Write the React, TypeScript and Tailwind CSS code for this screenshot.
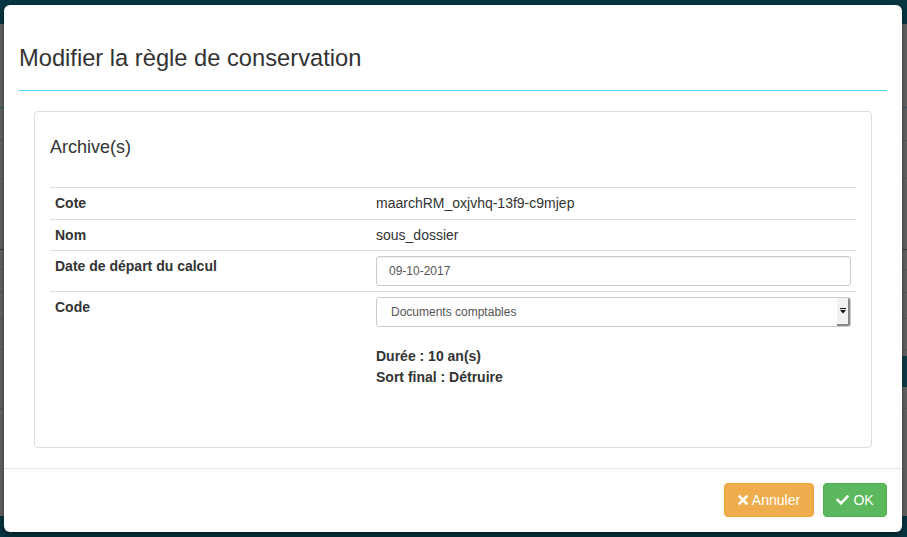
import React from "react";

function TimesIcon() {
  return (
    <svg width="10" height="10" viewBox="0 0 10 10" className="inline-block">
      <path d="M1.5 1.5 L8.5 8.5 M8.5 1.5 L1.5 8.5" stroke="white" strokeWidth="2.6" strokeLinecap="square" />
    </svg>
  );
}

function CheckIcon() {
  return (
    <svg width="13" height="10" viewBox="0 0 13 10" className="inline-block">
      <path d="M1.5 5 L5 8.3 L11.5 1.5" stroke="white" strokeWidth="2.6" fill="none" strokeLinecap="square" />
    </svg>
  );
}

export default function App() {
  const line = "h-px w-full";
  return (
    <div className="relative w-[907px] h-[537px] overflow-hidden font-['Liberation_Sans',Arial,sans-serif] text-[#333]">
      {/* backdrop page */}
      <div className="flex flex-col w-full h-full bg-[#686868]">
        <div className="h-[24px] bg-[#063743]" />
        <div className="h-[83px]" />
        <div className={`${line} bg-[#2f5f66]`} />
        <div className="h-[32px]" />
        <div className={`${line} bg-[#5a5a5a]`} />
        <div className="h-[37px]" />
        <div className={`${line} bg-[#5a5a5a]`} />
        <div className="h-[70px]" />
        <div className={`${line} bg-[#3c3c3c]`} />
        <div className="h-[19px]" />
        <div className={`${line} bg-[#5a5a5a]`} />
        <div className="h-[22px]" />
        <div className={`${line} bg-[#5a5a5a]`} />
        <div className="h-[25px]" />
        <div className={`${line} bg-[#5a5a5a]`} />
        <div className="h-[30px]" />
        <div className={`${line} bg-[#5a5a5a]`} />
        <div className="h-[6px]" />
        <div className="h-[31px] flex">
          <div className="w-[450px]" />
          <div className="flex-1 bg-[#0f3f4a]" />
        </div>
        <div className="h-[21px]" />
        <div className={`${line} bg-[#5a5a5a]`} />
        <div className="h-[107px]" />
        <div className="flex-1 bg-[#063743]" />
      </div>

      {/* modal */}
      <div className="absolute left-[4px] top-[5px] w-[898px] h-[527px] bg-white rounded-[6px] flex flex-col shadow-[0_3px_9px_rgba(0,0,0,0.5)]">
        <div className="mx-[15px] pt-[40px] pb-[19px] border-b border-[#4cd3f5]">
          <h3 className="text-[23.7px] leading-[26px] text-[#333] m-0">Modifier la règle de conservation</h3>
        </div>

        <div className="px-[30px] pt-[20px]">
          <div className="border border-[#dddddd] rounded-[4px] px-[15px] pt-[15px] h-[337px]">
            <div className="mt-[10px] mb-[30px] text-[18px] leading-[20px]">Archive(s)</div>
            <table className="w-full border-collapse text-[14px] leading-[20px]">
              <tbody>
                <tr className="border-t border-[#dddddd]">
                  <td className="w-[321px] pt-[5px] pb-[6px] px-[5px] font-bold align-top">Cote</td>
                  <td className="pt-[5px] pb-[6px] px-[5px] align-top">maarchRM_oxjvhq-13f9-c9mjep</td>
                </tr>
                <tr className="border-t border-[#dddddd]">
                  <td className="p-[5px] font-bold align-top">Nom</td>
                  <td className="p-[5px] align-top">sous_dossier</td>
                </tr>
                <tr className="border-t border-[#dddddd]">
                  <td className="p-[5px] font-bold align-top">Date de départ du calcul</td>
                  <td className="p-[5px] align-top">
                    <div className="h-[30px] border border-[#cccccc] rounded-[3px] px-[12px] flex items-center text-[12px] text-[#555] shadow-[inset_0_1px_1px_rgba(0,0,0,0.075)]">
                      09-10-2017
                    </div>
                  </td>
                </tr>
                <tr className="border-t border-[#dddddd]">
                  <td className="p-[5px] font-bold align-top">Code</td>
                  <td className="p-[5px] align-top">
                    <div className="h-[30px] border border-[#cccccc] rounded-[3px] flex items-stretch text-[12px] text-[#555]">
                      <div className="flex-1 flex items-center pl-[14px]">Documents comptables</div>
                      <div className="w-[13px] flex items-center justify-center bg-[#f2f2f2] border-r-2 border-b-2 border-[#8a8a8a] rounded-r-[2px]">
                        <svg width="6" height="6" viewBox="0 0 6 6">
                          <rect x="0" y="0" width="6" height="1" fill="#111" />
                          <path d="M0 2 L6 2 L3 5.5 Z" fill="#111" />
                        </svg>
                      </div>
                    </div>
                    <div className="mt-[19px] font-bold leading-[21px]">
                      <div>Durée : 10 an(s)</div>
                      <div>Sort final : Détruire</div>
                    </div>
                  </td>
                </tr>
              </tbody>
            </table>
          </div>
        </div>

        <div className="mt-auto h-[64px] border-t border-[#e5e5e5] flex items-center justify-end gap-[9px] pr-[15px] pb-[1px]">
          <button className="h-[34px] w-[90px] rounded-[4px] bg-[#f0ad4e] border border-[#eea236] text-white text-[14px] flex items-center justify-center gap-[4px]">
            <TimesIcon />
            <span>Annuler</span>
          </button>
          <button className="h-[34px] w-[64px] rounded-[4px] bg-[#5cb85c] border border-[#4cae4c] text-white text-[14px] flex items-center justify-center gap-[4px]">
            <CheckIcon />
            <span>OK</span>
          </button>
        </div>
      </div>
    </div>
  );
}
